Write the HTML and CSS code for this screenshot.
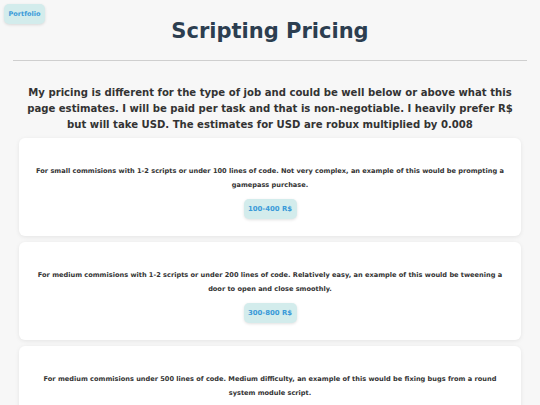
FILE: index.html
```html
<!DOCTYPE html>
<html>
<head>
<meta charset="utf-8">
<link rel="stylesheet" href="styles.css">
</head>
<body>
<a class="portfolio" href="#">Portfolio</a>
<main class="page">
  <h1 class="title">Scripting Pricing</h1>
  <hr class="rule">
  <p class="intro">My pricing is different for the type of job and could be well below or above what this page estimates. I will be paid per task and that is non-negotiable. I heavily prefer R$ but will take USD. The estimates for USD are robux multiplied by 0.008</p>
  <section class="cards">
    <div class="card">
      <p class="card-text">For small commisions with 1-2 scripts or under 100 lines of code. Not very complex, an example of this would be prompting a gamepass purchase.</p>
      <span class="price">100-400 R$</span>
    </div>
    <div class="card">
      <p class="card-text">For medium commisions with 1-2 scripts or under 200 lines of code. Relatively easy, an example of this would be tweening a door to open and close smoothly.</p>
      <span class="price">300-800 R$</span>
    </div>
    <div class="card">
      <p class="card-text">For medium commisions under 500 lines of code. Medium difficulty, an example of this would be fixing bugs from a round system module script.</p>
      <span class="price">800-1500 R$</span>
    </div>
  </section>
</main>
</body>
</html>
```

FILE: styles.css
```css
* { box-sizing: border-box; }
html, body { margin: 0; padding: 0; }
body {
  background: #f7f7f7;
  font-family: "DejaVu Sans", Verdana, sans-serif;
  font-weight: bold;
  color: #333;
}
.portfolio {
  position: absolute;
  left: 4px;
  top: 4px;
  width: 41px;
  height: 20px;
  display: flex;
  align-items: center;
  justify-content: center;
  background: #d3ecec;
  color: #3a9ad9;
  font-size: 6.5px;
  text-decoration: none;
  border-radius: 5px;
  box-shadow: 0 1px 3px rgba(0,0,0,0.12);
}
.page {
  padding: 0 13px;
}
.title {
  margin: 0;
  padding-top: 18px;
  font-size: 21px;
  line-height: 26px;
  text-align: center;
  color: #2c3e50;
}
.rule {
  margin: 16px 0 0;
  border: 0;
  border-top: 1.5px solid #cfcfcf;
  height: 0;
}
.intro {
  margin: 24px 0 0;
  font-size: 10.1px;
  line-height: 16px;
  text-align: center;
  color: #333;
  padding: 0 14px;
}
.cards {
  margin-top: 5px;
  padding: 0 6px;
  display: flex;
  flex-direction: column;
  gap: 6px;
}
.card {
  background: #fff;
  border-radius: 6px;
  box-shadow: 0 1px 4px rgba(0,0,0,0.08);
  padding: 27px 16px 17px;
  display: flex;
  flex-direction: column;
  align-items: center;
}
.card-text {
  margin: 0;
  font-size: 6.6px;
  line-height: 13.5px;
  text-align: center;
  color: #333;
}
.price {
  margin-top: 7px;
  width: 53px;
  height: 20px;
  display: flex;
  align-items: center;
  justify-content: center;
  background: #d3ecec;
  color: #3a9ad9;
  font-size: 6.9px;
  border-radius: 5px;
  box-shadow: 0 1px 3px rgba(0,0,0,0.12);
}
```
